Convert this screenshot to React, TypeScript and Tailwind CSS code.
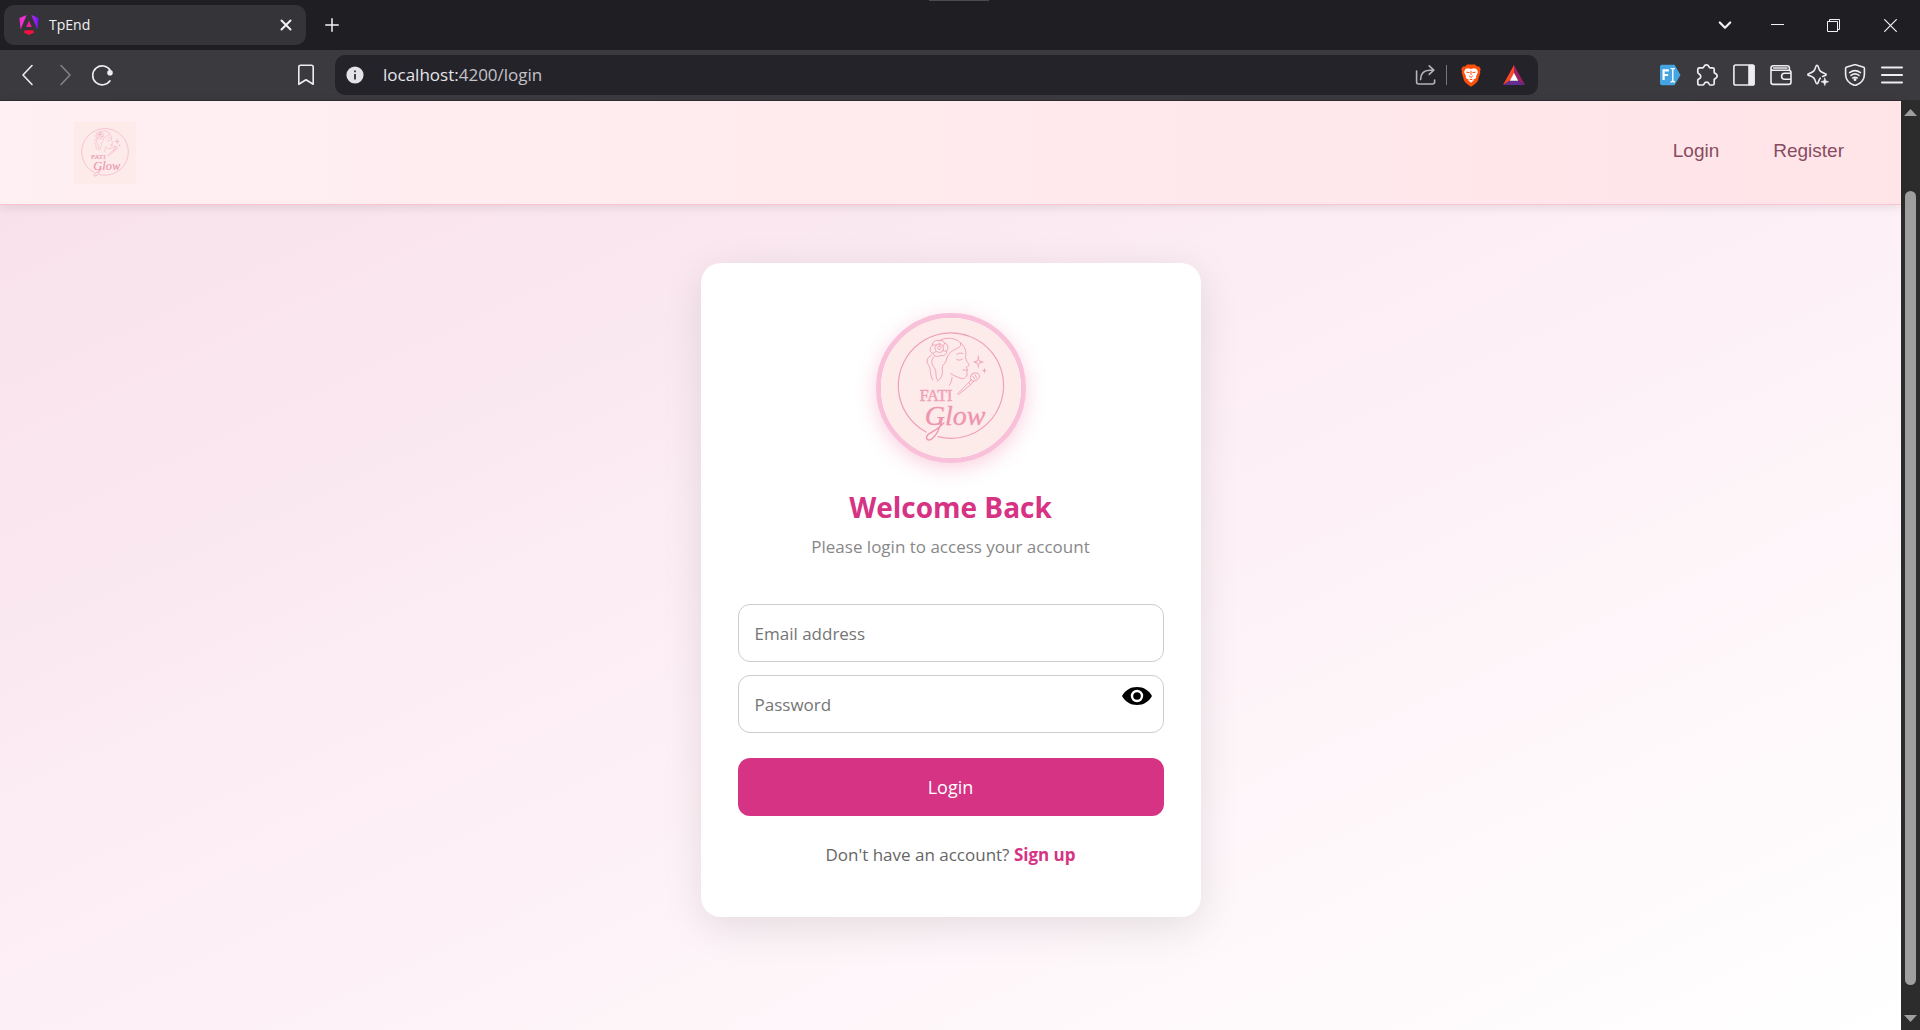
import React, { useId, useState } from "react";

const ui = "font-['Open_Sans','Noto_Sans',sans-serif]";

type IconProps = { className?: string; children: React.ReactNode; box?: string; width?: number };

function Icon({ className = "size-[22px]", children, box = "0 0 22 22", width = 1.6 }: IconProps) {
  return (
    <svg
      viewBox={box}
      className={className}
      fill="none"
      stroke="currentColor"
      strokeWidth={width}
      strokeLinecap="round"
      strokeLinejoin="round"
      aria-hidden="true"
    >
      {children}
    </svg>
  );
}

function AngularMark() {
  const id = useId();
  return (
    <svg viewBox="0 0 20 20" className="size-5" aria-hidden="true">
      <defs>
        <linearGradient id={id} x1="0" y1="0.2" x2="1" y2="0.2">
          <stop offset="0" stopColor="#c32bf0" />
          <stop offset="1" stopColor="#6a14f5" />
        </linearGradient>
      </defs>
      <path d="M7.6 0L0.4 3L1.6 14.6Z" fill="#f22fd0" />
      <path d="M12.4 0L19.6 3L18.4 14.6Z" fill={`url(#${id})`} />
      <path d="M14.2 15.2H5.8L4.8 17.4L10 20L15.2 17.4Z" fill="#f5113f" />
      <path d="M10 5.6L12.8 12H7.2Z" fill="#ee2097" />
    </svg>
  );
}

function BraveMark() {
  return (
    <svg viewBox="0 0 20 23" className="h-[23px] w-5" aria-hidden="true">
      <path
        d="M6 0.5H14L16 2.6L18.2 2.5L19.8 5.2L19 7L19.3 8.4L17 16.6C16.4 18.4 14 20.2 10 22.8C6 20.2 3.6 18.4 3 16.6L0.7 8.4L1 7L0.2 5.2L1.8 2.5L4 2.6Z"
        fill="#fb4f0a"
      />
      <path
        d="M7 4.2L10 5L13 4.2L15.6 5L17 8L15.2 12L15 14.2L12.4 15.6L12.8 16.6L10 18.8L7.2 16.6L7.6 15.6L5 14.2L4.8 12L3 8L4.4 5Z"
        fill="#fff"
      />
      <path
        d="M5.4 8.2L8.6 8.6M14.6 8.2L11.4 8.6M10 6.8V10.8M8.2 12L10 13.4L11.8 12M8.6 16L10 15.2L11.4 16"
        stroke="#fb4f0a"
        strokeWidth="1"
        fill="none"
      />
    </svg>
  );
}

function TriangleMark() {
  return (
    <svg viewBox="0 0 22 20" className="h-5 w-[22px]" aria-hidden="true">
      <path d="M11 0L0 20L7 15.6L11 8Z" fill="#ff4724" />
      <path d="M11 0L22 20L15 15.6L11 8Z" fill="#9e1f63" />
      <path d="M0 20H22L15 15.6H7Z" fill="#662d91" />
      <path d="M11 7.8L15.2 15.8H6.8Z" fill="#fff" />
    </svg>
  );
}

function TabStrip() {
  return (
    <div className="relative flex h-[50px] shrink-0 items-center bg-[#1f1e23] pl-1 text-[#f2f2f4]">
      <div className="absolute top-0 left-[929px] h-px w-[60px] bg-[#4b4b4b]" />
      <div className="flex h-10 w-[302px] items-center rounded-[10px] bg-[#353439] pr-[10px] pl-[15px]">
        <AngularMark />
        <span className="ml-[10px] flex-1 text-sm">TpEnd</span>
        <button aria-label="Close tab" className="flex size-5 items-center justify-center">
          <Icon className="size-3" box="0 0 12 12" width={2}>
            <path d="M1.5 1.5L10.5 10.5M10.5 1.5L1.5 10.5" />
          </Icon>
        </button>
      </div>
      <button aria-label="New tab" className="ml-[17px] flex size-[18px] items-center justify-center">
        <Icon className="size-[14px]" box="0 0 14 14" width={1.5}>
          <path d="M7 0.8V13.2M0.8 7H13.2" />
        </Icon>
      </button>
      <div className="ml-auto flex items-center">
        <button aria-label="Search tabs" className="flex w-12 justify-center">
          <Icon className="size-[14px]" box="0 0 14 14" width={2.2}>
            <path d="M1.8 4.5L7 9.8L12.2 4.5" />
          </Icon>
        </button>
        <button aria-label="Minimize" className="flex w-14 justify-center">
          <svg viewBox="0 0 13 13" className="size-[13px]" aria-hidden="true">
            <path d="M0 5.5H13" stroke="currentColor" />
          </svg>
        </button>
        <button aria-label="Restore" className="flex w-14 justify-center">
          <svg viewBox="0 0 13 13" className="size-[13px]" fill="none" stroke="currentColor" aria-hidden="true">
            <path d="M0.5 2.5H10.5V12.5H0.5ZM2.5 2.5V0.5H12.5V10.5H10.5" />
          </svg>
        </button>
        <button aria-label="Close window" className="flex w-[59px] justify-center">
          <svg viewBox="0 0 13 13" className="size-[13px]" fill="none" stroke="currentColor" strokeWidth="1.2" aria-hidden="true">
            <path d="M0.3 0.3L12.7 12.7M12.7 0.3L0.3 12.7" />
          </svg>
        </button>
      </div>
    </div>
  );
}

function Toolbar() {
  return (
    <div className="flex h-[51px] shrink-0 items-center border-b border-[#2e2d32] bg-[#3b3a3f] px-[17px] text-[#eeeef0]">
      <div className="flex items-center gap-[15px]">
        <button aria-label="Back">
          <Icon>
            <path d="M15 1.5L6 11L15 20.5" />
          </Icon>
        </button>
        <button aria-label="Forward" className="text-[#838287]">
          <Icon>
            <path d="M7 1.5L16 11L7 20.5" />
          </Icon>
        </button>
        <button aria-label="Reload">
          <Icon>
            <path d="M19.2 6.2A9.5 9.5 0 1 0 19 16.8" />
            <circle cx="19" cy="8.8" r="2" fill="currentColor" />
          </Icon>
        </button>
      </div>
      <button aria-label="Bookmark" className="ml-[182px]">
        <Icon>
          <path d="M3.8 20.3V3Q3.8 1.2 5.6 1.2H16.4Q18.2 1.2 18.2 3V20.3L11 15.8Z" />
        </Icon>
      </button>
      <div className="ml-[18px] flex h-10 min-w-0 flex-1 items-center rounded-[10px] bg-[#242329] pr-[13px] pl-[11px]">
        <svg viewBox="0 0 18 18" className="size-[18px]" aria-hidden="true">
          <circle cx="9" cy="9" r="8.6" fill="#e4e3e8" />
          <path d="M9 8V13.4M9 4.4V6.2" stroke="#3b3a3f" strokeWidth="1.9" />
        </svg>
        <span className="ml-[19px] flex-1 text-[17px] text-[#e6e5ea]">
          localhost:<span className="text-[#c3c2c8]">4200/login</span>
        </span>
        <button aria-label="Share" className="text-[#b5b4ba]">
          <Icon>
            <path d="M1.6 7V18Q1.6 20 3.6 20H17.4Q19.6 20 19.6 18V16M5.6 15.6Q5.8 6.2 14.6 6.2H18.6M14.2 1.8L18.8 6.2L14.2 10.4" />
          </Icon>
        </button>
        <span className="mr-[14px] ml-[9px] h-5 w-px bg-[#77767c]" />
        <button aria-label="Shields">
          <BraveMark />
        </button>
        <button aria-label="Rewards" className="ml-[22px]">
          <TriangleMark />
        </button>
      </div>
      <div className="ml-[121px] flex items-center gap-[15px]">
        <button aria-label="Font identifier">
          <svg viewBox="0 0 22 22" className="size-[22px]" aria-hidden="true">
            <path d="M3 0.8H15.5L21.5 11L15.5 21.2H3Q1 21.2 1 19.2V2.8Q1 0.8 3 0.8Z" fill="#45a4e2" />
            <path d="M4.6 16V6.4H9.8M4.6 11H9.2" fill="none" stroke="#fff" strokeWidth="2.2" />
            <path d="M11.6 4.4Q13.6 4.4 13.8 6Q14 4.4 16 4.4M13.8 6V16.4M11.6 18Q13.6 18 13.8 16.4Q14 18 16 18" fill="none" stroke="#fff" strokeWidth="1.4" />
          </svg>
        </button>
        <button aria-label="Extensions">
          <Icon width={1.7}>
            <path d="M3.4 3.8H6.8C8 3.8 7.6 0.9 10.4 0.9S12.8 3.8 14 3.8H16.6Q18.2 3.8 18.2 5.4V8.4C18.2 9.6 21.2 9.2 21.2 12S18.2 14.4 18.2 15.6V19.4Q18.2 21 16.6 21H14C12.8 21 13.4 18.2 10.6 18.2S8.2 21 7 21H3.4Q1.8 21 1.8 19.4V16C1.8 14.8 4.8 15.2 4.8 12.4S1.8 9.8 1.8 8.6V5.4Q1.8 3.8 3.4 3.8Z" />
          </Icon>
        </button>
        <button aria-label="Sidebar">
          <Icon>
            <rect x="0.9" y="1" width="20.2" height="20" rx="1.8" />
            <path d="M16 1.6H20.6V20.4H16Z" fill="currentColor" />
          </Icon>
        </button>
        <button aria-label="Wallet">
          <Icon>
            <path d="M1 4.2V18Q1 20.4 3.4 20.4H18.6Q21 20.4 21 18V8.4Q21 6.2 18.6 6.2H3Q1 6.2 1 4.2Q1 1.8 3.4 1.8H17Q19.4 1.8 19.4 4V6M3.6 4H17M21 9.2H14.6Q11.6 9.2 11.6 12.2T14.6 15.2H21" />
          </Icon>
        </button>
        <button aria-label="Assistant">
          <Icon>
            <path d="M13.2 14.2C12.4 15.2 11.8 16.4 11.2 18.4Q10.8 19.8 10 19.8T8.8 18.4C7.6 14 6.6 13 2.2 11.6Q0.8 11.4 0.8 10.6T2.2 9.4C6.6 8 7.6 7 8.8 2.6Q9.2 1.2 10 1.2T11.2 2.6C12.4 7 13.4 8 17.8 9.4Q19.2 9.8 19.2 10.6T17.8 11.6L15.6 12.4" />
            <path d="M17.8 14L18.8 16.8L21.6 17.8L18.8 18.8L17.8 21.6L16.8 18.8L14 17.8L16.8 16.8Z" fill="currentColor" strokeWidth="0.6" />
          </Icon>
        </button>
        <button aria-label="VPN">
          <Icon>
            <path d="M11 0.6L19.8 3.2Q20.4 3.4 20.4 4.2V10.4C20.4 15.6 17 19.4 11 21.6C5 19.4 1.6 15.6 1.6 10.4V4.2Q1.6 3.4 2.2 3.2Z" />
            <path d="M5.6 8.6Q11 4.6 16.4 8.6M7 11.4Q11 8.4 15 11.4M8.8 14Q11 12.4 13.2 14" />
            <circle cx="11" cy="15.4" r="0.7" fill="currentColor" />
          </Icon>
        </button>
        <button aria-label="Menu">
          <Icon width={1.8}>
            <path d="M0.9 3.5H21.1M0.9 11H21.1M0.9 18.5H21.1" />
          </Icon>
        </button>
      </div>
    </div>
  );
}

function BrandLogo({ className }: { className: string }) {
  return (
    <svg viewBox="63 54 420 420" className={className} role="img" aria-label="Fati Glow">
      <rect x="63" y="54" width="420" height="420" fill="#fcebe8" />
      <g fill="none" stroke="#f0a0b8" strokeWidth="3.6" strokeLinecap="round" strokeLinejoin="round">
        <path d="M234 410A158 158 0 1 0 198 396" />
        <g strokeWidth="2.8">
          <path d="M242 120C262 110 288 114 301 128C304 134 302 138 297 142C288 148 272 152 265 165C256 178 262 184 252 192C242 202 250 214 246 224C243 234 238 240 232 244" />
          <path d="M301 128C312 136 317 148 318 160C317 168 315 172 318 178C320 186 326 190 327 196C326 200 320 200 318 202C318 206 323 207 323 210C318 211 312 211 309 210M323 211C321 214 320 215 321 218C323 228 316 235 308 236C296 234 284 228 272 221" />
          <path d="M290 178C296 182 302 181 307 177M290 163C297 158 304 158 309 161M276 232C276 242 272 250 268 256" />
          <path d="M214 166C200 172 198 184 206 196C214 208 208 222 218 240M222 170C212 180 214 192 222 202C232 214 224 228 232 240" />
          <path d="M238 122C226 118 216 126 217 136C206 144 210 158 218 160C222 170 236 172 242 166C254 170 262 160 260 152C268 144 262 130 254 130C250 122 244 120 238 122Z" />
          <path d="M238 132C228 132 222 140 226 148C228 158 242 160 248 153C254 146 250 132 238 132ZM238 138C232 139 231 146 236 148C242 150 245 144 243 140C242 138 240 137 238 138ZM217 136Q224 132 230 136M218 160Q224 160 228 154M260 152Q254 156 248 152M254 130Q252 138 248 138" />
          <path d="M336 222C330 228 330 236 334 241C342 246 350 242 355 236C360 230 360 224 354 221C348 217 342 218 336 222ZM333 240L326 248L332 254L341 244M326 248L296 278C291 284 294 285 299 281L332 254M338 228L345 238M345 224L350 234" />
        </g>
      </g>
      <g fill="#f0a0b8">
        <path d="M355 163L358 181L372 186L358 191L355 208L352 191L339 186L352 181Z" />
        <path d="M373 203L375 210L381 212L375 214L373 221L371 214L366 212L371 210Z" />
        <path d="M355 176L357 184L364 186L357 188L355 196L353 188L347 186L353 184Z" fill="#fcebe8" />
        <text
          x="179"
          y="302"
          fontSize="48"
          stroke="#f0a0b8"
          strokeWidth="1.4"
          className="font-['Liberation_Serif',serif]"
        >
          FATI
        </text>
        <text
          x="194"
          y="376"
          fontSize="84"
          stroke="#ee94b0"
          fill="#ee94b0"
          className="font-['Liberation_Serif',serif] italic"
        >
          Glow
        </text>
      </g>
      <path
        d="M246 356C242 382 228 410 212 419C199 424 195 411 206 402C220 393 238 386 252 368"
        fill="none"
        stroke="#ee94b0"
        strokeWidth="4"
        strokeLinecap="round"
      />
    </svg>
  );
}

function SiteHeader() {
  return (
    <header className="relative flex h-[104px] shrink-0 items-center justify-between border-b border-[#fbc2cf] bg-linear-to-r from-[#fff0f3] to-[#ffe4e8] pr-[57px] pl-[74px] shadow-[0_2px_10px_rgba(0,0,0,0.1)]">
      <a href="#home">
        <BrandLogo className="size-[62px]" />
      </a>
      <nav className="flex gap-[54px] pb-1 font-['Liberation_Sans',Arial,sans-serif] text-[19px] leading-6 text-[#874c5f]">
        <a href="#login">Login</a>
        <a href="#register">Register</a>
      </nav>
    </header>
  );
}

const field =
  "block h-[58px] w-full rounded-xl border border-[#cccccc] bg-white px-4 text-[17px] text-[#333333] outline-none placeholder:text-[#757575]";

function LoginCard() {
  const [visible, setVisible] = useState(false);
  return (
    <section className="flex w-full max-w-[500px] flex-col items-center rounded-[20px] bg-white px-[37px] pt-[50px] pb-[50px] shadow-[0_10px_40px_rgba(0,0,0,0.1)]">
      <BrandLogo className="size-[150px] rounded-full border-5 border-[#f8c1d9] shadow-[0_5px_20px_rgba(240,98,146,0.3)]" />
      <h1 className="mt-6 text-[28px] leading-10 font-bold text-[#d63384]">Welcome Back</h1>
      <p className="mt-2 text-[17px] leading-6 text-[#888888]">Please login to access your account</p>
      <form className="mt-[45px] w-full" onSubmit={(e) => e.preventDefault()}>
        <input type="email" aria-label="Email address" placeholder="Email address" className={field} />
        <div className="relative mt-[13px]">
          <input
            type={visible ? "text" : "password"}
            aria-label="Password"
            placeholder="Password"
            className={field}
          />
          <button
            type="button"
            aria-label="Show password"
            onClick={() => setVisible(!visible)}
            className="absolute top-3 right-3"
          >
            <svg viewBox="0 0 30 18" className="h-[18px] w-[30px]" aria-hidden="true">
              <path d="M0 9C3 3.4 8.4 0 15 0S27 3.4 30 9C27 14.6 21.6 18 15 18S3 14.6 0 9Z" fill="#000" />
              <circle cx="15" cy="9" r="5" fill="#000" stroke="#fff" strokeWidth="2.4" />
            </svg>
          </button>
        </div>
        <button type="submit" className="mt-[25px] h-[58px] w-full rounded-xl bg-[#d63384] text-lg text-white">
          Login
        </button>
      </form>
      <p className="mt-[26px] text-[17px] leading-[25px] text-[#666666]">
        Don't have an account?{" "}
        <a href="#signup" className="font-bold text-[#d63384]">
          Sign up
        </a>
      </p>
    </section>
  );
}

function PageScrollbar() {
  return (
    <div className="flex w-[19px] shrink-0 flex-col items-center bg-[#2c2c2c] text-[#9f9f9f]">
      <svg viewBox="0 0 13 7" className="mt-2 h-[7px] w-[13px]" aria-hidden="true">
        <path d="M6.5 0L13 7H0Z" fill="currentColor" />
      </svg>
      <div className="mt-[75px] mb-[30px] w-[11px] flex-1 rounded-full bg-[#9f9f9f]" />
      <svg viewBox="0 0 13 7" className="mb-2 h-[7px] w-[13px]" aria-hidden="true">
        <path d="M6.5 7L13 0H0Z" fill="currentColor" />
      </svg>
    </div>
  );
}

export default function App() {
  return (
    <div className={`flex h-screen flex-col overflow-hidden ${ui}`}>
      <TabStrip />
      <Toolbar />
      <div className="flex min-h-0 flex-1">
        <div className="flex min-w-0 flex-1 flex-col">
          <SiteHeader />
          <main className="flex flex-1 flex-col items-center bg-linear-155 from-[#f8e1eb] via-[#fdf0f6] to-white px-4 pt-[58px]">
            <LoginCard />
          </main>
        </div>
        <PageScrollbar />
      </div>
    </div>
  );
}
